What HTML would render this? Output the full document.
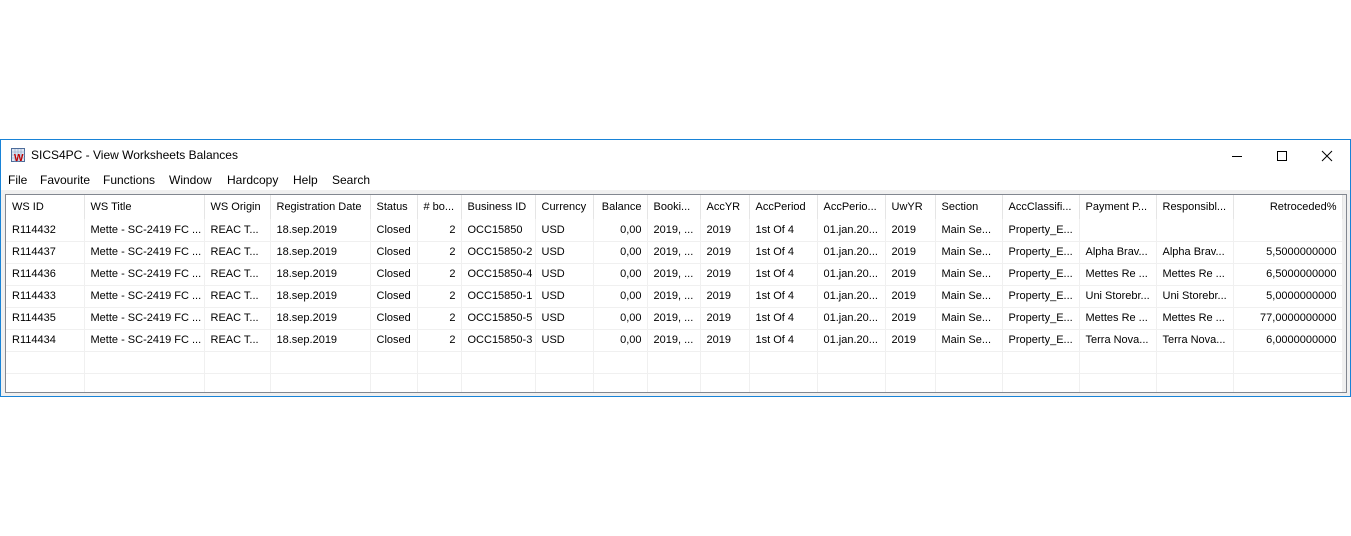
<!DOCTYPE html>
<html><head><style>
*{margin:0;padding:0;box-sizing:border-box}
body{width:1351px;height:536px;background:#fff;font-family:"Liberation Sans",sans-serif;font-size:12px;color:#000;position:relative;overflow:hidden}
.win{position:absolute;left:0;top:139px;width:1351px;height:258px;border:1px solid #1883d7;background:#f0f0f0}
.title{position:absolute;left:0;top:0;width:1349px;height:30px;background:#fff}
.title .t{position:absolute;left:30px;top:8px;font-size:12px}
.menu{position:absolute;left:0;top:30px;width:1349px;height:20px;background:#fff}
.menu span{position:absolute;top:3px}
.grid{position:absolute;left:4px;top:54px;width:1342px;height:199px;border:1px solid #828790;background:#fff;overflow:hidden}
table{position:absolute;left:0;top:0;border-collapse:collapse;table-layout:fixed;width:1336px;font-size:11px}
td{height:22px;border-right:1px solid #f0f0f0;border-bottom:1px solid #f0f0f0;padding:0 5px 0 6px;white-space:nowrap;overflow:hidden}
tr.h td{height:24px;border-right:1px solid #e5e5e5;border-bottom:none}
.r{text-align:right}
.rb{position:absolute;left:1337px;top:0;width:4px;height:199px;background:#f0f0f0}
</style></head><body>
<div class="win">
<div class="title">
<svg style="position:absolute;left:10px;top:8px" width="15" height="15" viewBox="0 0 15 15"><rect x="0.5" y="0.5" width="13" height="13" fill="#dfe7f3" stroke="#4d6c9a"/><path d="M1 4H14M1 7H14M1 10H14M4 1V14M7 1V14M10 1V14" stroke="#8aa3c7" stroke-width="0.6"/><text x="3" y="13" font-size="10" font-weight="bold" fill="#c00000" font-family="Liberation Sans">W</text></svg>
<span class="t">SICS4PC - View Worksheets Balances</span>
<svg style="position:absolute;left:1230px;top:10px" width="110" height="12"><path d="M1 6.5H11" stroke="#000"/><rect x="46.5" y="1.5" width="9" height="9" fill="none" stroke="#000"/><path d="M91 1L101 11M101 1L91 11" stroke="#000"/></svg>
</div>
<div class="menu">
<span style="left:7px">File</span><span style="left:39px">Favourite</span><span style="left:102px">Functions</span><span style="left:168px">Window</span><span style="left:226px">Hardcopy</span><span style="left:292px">Help</span><span style="left:331px">Search</span>
</div>
<div class="grid">
<table>
<colgroup><col style="width:78px"><col style="width:120px"><col style="width:66px"><col style="width:100px"><col style="width:47px"><col style="width:44px"><col style="width:74px"><col style="width:58px"><col style="width:54px"><col style="width:53px"><col style="width:49px"><col style="width:68px"><col style="width:68px"><col style="width:50px"><col style="width:67px"><col style="width:77px"><col style="width:77px"><col style="width:77px"><col style="width:109px"></colgroup>
<tr class="h"><td>WS ID</td><td>WS Title</td><td>WS Origin</td><td>Registration Date</td><td>Status</td><td>#&nbsp;bo...</td><td>Business ID</td><td>Currency</td><td class="r">Balance</td><td>Booki...</td><td>AccYR</td><td>AccPeriod</td><td>AccPerio...</td><td>UwYR</td><td>Section</td><td>AccClassifi...</td><td>Payment P...</td><td>Responsibl...</td><td class="r">Retroceded%</td></tr>
<tr><td>R114432</td><td>Mette - SC-2419 FC ...</td><td>REAC T...</td><td>18.sep.2019</td><td>Closed</td><td class="r">2</td><td>OCC15850</td><td>USD</td><td class="r">0,00</td><td>2019, ...</td><td>2019</td><td>1st Of 4</td><td>01.jan.20...</td><td>2019</td><td>Main Se...</td><td>Property_E...</td><td></td><td></td><td></td></tr>
<tr><td>R114437</td><td>Mette - SC-2419 FC ...</td><td>REAC T...</td><td>18.sep.2019</td><td>Closed</td><td class="r">2</td><td>OCC15850-2</td><td>USD</td><td class="r">0,00</td><td>2019, ...</td><td>2019</td><td>1st Of 4</td><td>01.jan.20...</td><td>2019</td><td>Main Se...</td><td>Property_E...</td><td>Alpha Brav...</td><td>Alpha Brav...</td><td class="r">5,5000000000</td></tr>
<tr><td>R114436</td><td>Mette - SC-2419 FC ...</td><td>REAC T...</td><td>18.sep.2019</td><td>Closed</td><td class="r">2</td><td>OCC15850-4</td><td>USD</td><td class="r">0,00</td><td>2019, ...</td><td>2019</td><td>1st Of 4</td><td>01.jan.20...</td><td>2019</td><td>Main Se...</td><td>Property_E...</td><td>Mettes Re ...</td><td>Mettes Re ...</td><td class="r">6,5000000000</td></tr>
<tr><td>R114433</td><td>Mette - SC-2419 FC ...</td><td>REAC T...</td><td>18.sep.2019</td><td>Closed</td><td class="r">2</td><td>OCC15850-1</td><td>USD</td><td class="r">0,00</td><td>2019, ...</td><td>2019</td><td>1st Of 4</td><td>01.jan.20...</td><td>2019</td><td>Main Se...</td><td>Property_E...</td><td>Uni Storebr...</td><td>Uni Storebr...</td><td class="r">5,0000000000</td></tr>
<tr><td>R114435</td><td>Mette - SC-2419 FC ...</td><td>REAC T...</td><td>18.sep.2019</td><td>Closed</td><td class="r">2</td><td>OCC15850-5</td><td>USD</td><td class="r">0,00</td><td>2019, ...</td><td>2019</td><td>1st Of 4</td><td>01.jan.20...</td><td>2019</td><td>Main Se...</td><td>Property_E...</td><td>Mettes Re ...</td><td>Mettes Re ...</td><td class="r">77,0000000000</td></tr>
<tr><td>R114434</td><td>Mette - SC-2419 FC ...</td><td>REAC T...</td><td>18.sep.2019</td><td>Closed</td><td class="r">2</td><td>OCC15850-3</td><td>USD</td><td class="r">0,00</td><td>2019, ...</td><td>2019</td><td>1st Of 4</td><td>01.jan.20...</td><td>2019</td><td>Main Se...</td><td>Property_E...</td><td>Terra Nova...</td><td>Terra Nova...</td><td class="r">6,0000000000</td></tr>
<tr><td></td><td></td><td></td><td></td><td></td><td></td><td></td><td></td><td></td><td></td><td></td><td></td><td></td><td></td><td></td><td></td><td></td><td></td><td></td></tr>
<tr><td></td><td></td><td></td><td></td><td></td><td></td><td></td><td></td><td></td><td></td><td></td><td></td><td></td><td></td><td></td><td></td><td></td><td></td><td></td></tr>
</table>
<div class="rb"></div>
</div>
</div>
</body></html>
